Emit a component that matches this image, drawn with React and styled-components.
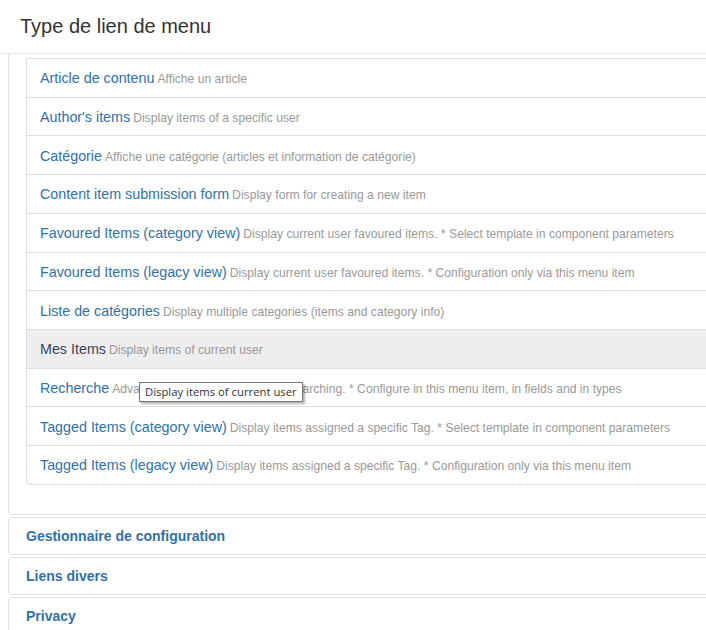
import styled, { createGlobalStyle } from "styled-components";

const GlobalStyle = createGlobalStyle`
    html, body {
        margin: 0;
        padding: 0;
        background: #fff;
        overflow: hidden;
    }
    body {
        font-family: "Liberation Sans", Arial, sans-serif;
        color: #333;
    }
`;

const StyledPage = styled.div`
    width: 706px;
    height: 630px;
    overflow: hidden;
`;

const StyledHeader = styled.header`
    height: 54px;
    box-sizing: border-box;
    border-bottom: 1px solid #e5e5e5;
    padding: 15px 20px 0;
    h3 {
        margin: 0;
        font-size: 20px;
        line-height: 22px;
        font-weight: normal;
        color: #333;
    }
`;

const StyledBody = styled.div`
    padding: 0 0 0 8px;
    display: flex;
    flex-direction: column;
    gap: 2px;
`;

const StyledPanel = styled.section`
    margin-right: -40px;
    border: 1px solid #e0e0e0;
    border-top: ${(props) => (props.$cut ? "none" : "1px solid #e0e0e0")};
    border-radius: ${(props) => (props.$cut ? "0 0 4px 4px" : "4px")};
    background: #fff;
`;

const StyledPanelHeading = styled.div`
    padding: 1px 17px 0;
    height: 36px;
    box-sizing: border-box;
    display: flex;
    align-items: center;
    font-size: 14px;
    font-weight: bold;
    color: #3071a9;
`;

const StyledPanelBody = styled.div`
    padding: 4px 0 29px 17px;
`;

const StyledList = styled.ul`
    list-style: none;
    margin: 0;
    padding: 0;
    border: 1px solid #ddd;
    border-radius: 0 0 4px 4px;
`;

const StyledItem = styled.li`
    position: relative;
    height: 37.73px;
    padding: 0 13px;
    display: flex;
    align-items: center;
    font-size: 14px;
    line-height: 1;
    border-bottom: 1px solid #ddd;
    box-sizing: content-box;
    background: ${(props) => (props.$hover ? "#eeeeee" : "#fff")};
    white-space: nowrap;
    z-index: ${(props) => (props.$hover ? 2 : 1)};
    &:last-child {
        border-bottom: none;
        border-radius: 0 0 4px 4px;
    }
`;

const StyledLine = styled.span`
    display: block;
    line-height: 1;
    padding-top: 1px;
`;

const StyledTitle = styled.a`
    font-size: 14.3px;
    line-height: 1;
    color: ${(props) => (props.$hover ? "#37455a" : "#3071a9")};
    text-decoration: none;
`;

const StyledDesc = styled.small`
    font-size: 12.15px;
    line-height: 1;
    color: #999;
    margin-left: 3px;
`;

const StyledTooltip = styled.div`
    position: absolute;
    top: 52px;
    left: 112px;
    height: 20px;
    box-sizing: border-box;
    padding: 0 5px;
    display: flex;
    align-items: center;
    background: #fff;
    border: 1px solid #767676;
    box-shadow: 2px 2px 2px rgba(0, 0, 0, 0.3);
    font-family: "Open Sans", "Noto Sans", sans-serif;
    font-size: 11.3px;
    color: #333;
    z-index: 10;
`;

const items = [
    { title: "Article de contenu", desc: "Affiche un article" },
    { title: "Author's items", desc: "Display items of a specific user" },
    { title: "Catégorie", desc: "Affiche une catégorie (articles et information de catégorie)" },
    { title: "Content item submission form", desc: "Display form for creating a new item" },
    { title: "Favoured Items (category view)", desc: "Display current user favoured items. * Select template in component parameters" },
    { title: "Favoured Items (legacy view)", desc: "Display current user favoured items. * Configuration only via this menu item" },
    { title: "Liste de catégories", desc: "Display multiple categories (items and category info)" },
    { title: "Mes Items", desc: "Display items of current user", hover: true },
    { title: "Recherche", desc: "Advanced searches, readymade searching. * Configure in this menu item, in fields and in types" },
    { title: "Tagged Items (category view)", desc: "Display items assigned a specific Tag. * Select template in component parameters" },
    { title: "Tagged Items (legacy view)", desc: "Display items assigned a specific Tag. * Configuration only via this menu item" },
];

const sections = ["Gestionnaire de configuration", "Liens divers", "Privacy"];

const App = () => {
    return (
        <StyledPage>
            <GlobalStyle />
            <StyledHeader>
                <h3>Type de lien de menu</h3>
            </StyledHeader>
            <StyledBody>
                <StyledPanel $cut>
                    <StyledPanelBody>
                        <StyledList>
                            {items.map((item) => (
                                <StyledItem key={item.title} $hover={item.hover}>
                                    <StyledLine>
                                        <StyledTitle href="#" $hover={item.hover}>{item.title}</StyledTitle>
                                        <StyledDesc>{item.desc}</StyledDesc>
                                    </StyledLine>
                                    {item.hover && <StyledTooltip>{item.desc}</StyledTooltip>}
                                </StyledItem>
                            ))}
                        </StyledList>
                    </StyledPanelBody>
                </StyledPanel>
                {sections.map((name) => (
                    <StyledPanel key={name}>
                        <StyledPanelHeading>{name}</StyledPanelHeading>
                    </StyledPanel>
                ))}
            </StyledBody>
        </StyledPage>
    );
};

export default App;
